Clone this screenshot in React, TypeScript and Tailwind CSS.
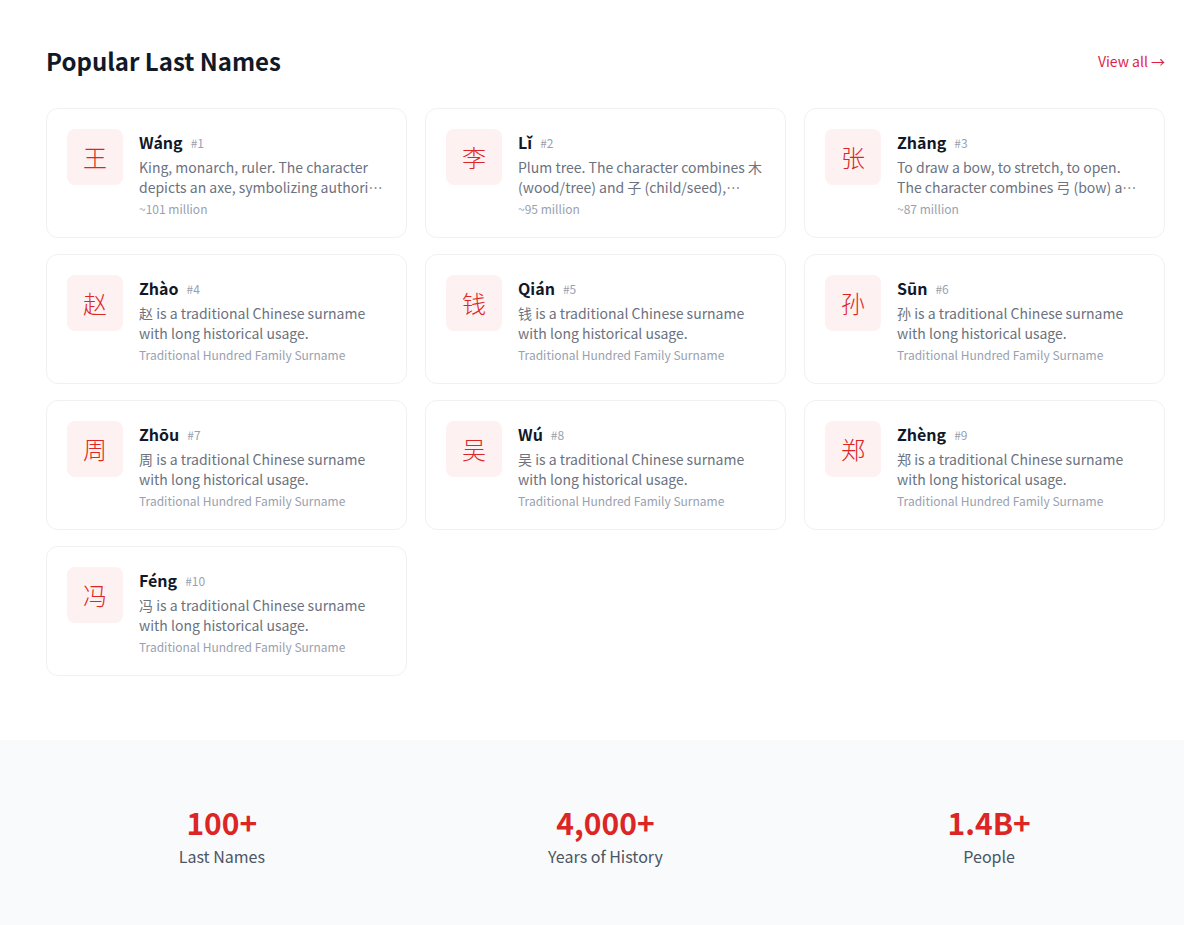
const font = { fontFamily: '"Noto Sans CJK SC", "Noto Sans", sans-serif' };

type Surname = {
  char: string;
  pinyin: string;
  rank: number;
  meaning: string;
  note: string;
};

const surnames: Surname[] = [
  {
    char: "王",
    pinyin: "Wáng",
    rank: 1,
    meaning:
      "King, monarch, ruler. The character depicts an axe, symbolizing authority and royal power in ancient China.",
    note: "~101 million",
  },
  {
    char: "李",
    pinyin: "Lǐ",
    rank: 2,
    meaning:
      "Plum tree. The character combines 木 (wood/tree) and 子 (child/seed), representing the fruit of the tree.",
    note: "~95 million",
  },
  {
    char: "张",
    pinyin: "Zhāng",
    rank: 3,
    meaning:
      "To draw a bow, to stretch, to open. The character combines 弓 (bow) and 长 (long).",
    note: "~87 million",
  },
  { char: "赵", pinyin: "Zhào", rank: 4, meaning: "", note: "" },
  { char: "钱", pinyin: "Qián", rank: 5, meaning: "", note: "" },
  { char: "孙", pinyin: "Sūn", rank: 6, meaning: "", note: "" },
  { char: "周", pinyin: "Zhōu", rank: 7, meaning: "", note: "" },
  { char: "吴", pinyin: "Wú", rank: 8, meaning: "", note: "" },
  { char: "郑", pinyin: "Zhèng", rank: 9, meaning: "", note: "" },
  { char: "冯", pinyin: "Féng", rank: 10, meaning: "", note: "" },
];

const stats = [
  { value: "100+", label: "Last Names" },
  { value: "4,000+", label: "Years of History" },
  { value: "1.4B+", label: "People" },
];

const SurnameCard = ({ s }: { s: Surname }) => {
  const meaning = s.meaning || `${s.char} is a traditional Chinese surname with long historical usage.`;
  const note = s.note || "Traditional Hundred Family Surname";
  return (
    <div className="flex gap-4 rounded-xl border border-[#f0f1f3] bg-white p-5">
      <div className="flex h-14 w-14 shrink-0 items-center justify-center rounded-lg bg-[#fef1f1] text-[24px] font-light text-[#dc2626]">
        {s.char}
      </div>
      <div className="min-w-0 flex-1">
        <div className="mb-[2px] flex h-[26px] items-center gap-2">
          <span className="text-base leading-6 font-bold text-[#111827]">{s.pinyin}</span>
          <span className="mt-[2px] text-xs leading-4 text-gray-400">#{s.rank}</span>
        </div>
        <p className="line-clamp-2 text-sm leading-5 text-[#6b7280]">{meaning}</p>
        <p className="mt-1 text-xs leading-4 text-gray-400">{note}</p>
      </div>
    </div>
  );
};

export default function App() {
  return (
    <div className="min-h-screen bg-white" style={font}>
      <section className="pt-[45px] pb-16 pl-[46px] pr-[19px]">
        <div className="mb-[31px] flex items-center justify-between">
          <h2 className="text-2xl leading-8 font-bold text-[#111827]">Popular Last Names</h2>
          <a href="#" className="text-sm leading-5 text-[#e11d48]">
            View all →
          </a>
        </div>
        <div className="grid grid-cols-3 gap-x-[18px] gap-y-4">
          {surnames.map((s) => (
            <SurnameCard key={s.rank} s={s} />
          ))}
        </div>
      </section>
      <section className="bg-[#f9fafb] pt-16 pb-16 pl-[46px] pr-[19px]">
        <div className="grid grid-cols-3 gap-8 text-center">
          {stats.map((st) => (
            <div key={st.label}>
              <div className="text-3xl leading-9 font-bold text-[#dc2626]">{st.value}</div>
              <div className="mt-1 text-base leading-6 text-[#4b5563]">{st.label}</div>
            </div>
          ))}
        </div>
      </section>
    </div>
  );
}
